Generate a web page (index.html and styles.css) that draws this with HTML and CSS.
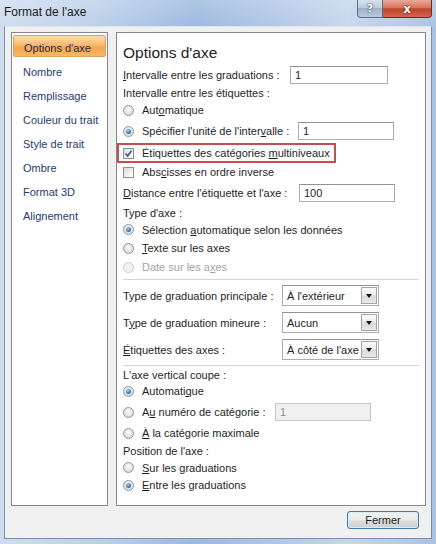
FILE: index.html
```html
<!DOCTYPE html>
<html lang="fr">
<head>
<meta charset="utf-8">
<title>Format de l'axe</title>
<link rel="stylesheet" href="styles.css">
</head>
<body>
<div class="window">
  <div class="titlebar">
    <span class="title">Format de l'axe</span>
    <div class="caption-btns">
      <span class="cbtn help">?</span>
      <span class="cbtn close">x</span>
    </div>
  </div>
  <div class="client">
    <div class="main">
      <ul class="nav">
        <li class="sel">Options d'axe</li>
        <li>Nombre</li>
        <li>Remplissage</li>
        <li>Couleur du trait</li>
        <li>Style de trait</li>
        <li>Ombre</li>
        <li>Format 3D</li>
        <li>Alignement</li>
      </ul>
      <div class="panel">
        <h1 class="heading">Options d'axe</h1>
        <div class="row h21"><span class="lab w167"><u>I</u>ntervalle entre les graduations :</span><span class="field w98">1</span></div>
        <div class="row h16"><span>Intervalle entre les étiquettes :</span></div>
        <div class="row h18"><span class="radio"></span><span>Aut<u>o</u>matique</span></div>
        <div class="row h24"><span class="radio on"></span><span class="lab w156">Spécifier l'unité de l'inter<u>v</u>alle :</span><span class="field w96">1</span></div>
        <div class="row h20 mark"><span class="check"><svg class="tick" viewBox="0 0 9 9" width="9" height="9"><path d="M1.6 4.4 L3.6 6.9 L7.6 1.7" /></svg></span><span>Étiquettes des catégories <u>m</u>ultiniveaux</span></div>
        <div class="row h18"><span class="check"></span><span>Abs<u>c</u>isses en ordre inverse</span></div>
        <div class="row h24"><span class="lab w176"><u>D</u>istance entre l'étiquette et l'axe :</span><span class="field w96">100</span></div>
        <div class="row h16"><span>Type d'axe :</span></div>
        <div class="row h17"><span class="radio on"></span><span>Sélection <u>a</u>utomatique selon les données</span></div>
        <div class="row h20"><span class="radio"></span><span><u>T</u>exte sur les axes</span></div>
        <div class="row h18 dis"><span class="radio"></span><span>Date sur les a<u>x</u>es</span></div>
        <div class="sep sep1"></div>
        <div class="row h27"><span class="lab w159">Type de <u>g</u>raduation principale :</span><span class="select"><span class="val">À l'extérieur</span><span class="drop"><span class="arrow"></span></span></span></div>
        <div class="row h27"><span class="lab w159">T<u>y</u>pe de graduation mineure :</span><span class="select"><span class="val">Aucun</span><span class="drop"><span class="arrow"></span></span></span></div>
        <div class="row h27"><span class="lab w159"><u>É</u>tiquettes des axes :</span><span class="select"><span class="val">À côté de l'axe</span><span class="drop"><span class="arrow"></span></span></span></div>
        <div class="sep sep2"></div>
        <div class="row h14"><span>L'axe vertical coupe :</span></div>
        <div class="row h18"><span class="radio on"></span><span>Automati<u>q</u>ue</span></div>
        <div class="row h24"><span class="radio"></span><span class="lab w133">A<u>u</u> numéro de catégorie :</span><span class="field w96 disabled">1</span></div>
        <div class="row h18"><span class="radio"></span><span><u>À</u> la catégorie maximale</span></div>
        <div class="row h18"><span>Position de l'axe :</span></div>
        <div class="row h15"><span class="radio"></span><span><u>S</u>ur les graduations</span></div>
        <div class="row h20"><span class="radio on"></span><span><u>E</u>ntre les graduations</span></div>
      </div>
    </div>
    <div class="footer"><button class="btn">Fermer</button></div>
  </div>
</div>
</body>
</html>
```
FILE: styles.css
```css
html, body {
  margin: 0;
  padding: 0;
}
body {
  font-family: "Liberation Sans", Arial, sans-serif;
  font-size: 11px;
  color: #1e1e1e;
}
.window {
  width: 436px;
  height: 544px;
  display: flex;
  flex-direction: column;
  background: linear-gradient(to right, #d0ddef 0%, #bcd0ea 22%, #9cb9df 45%, #b0c6e5 62%, #c6d6ec 80%, #abc2e2 100%);
  box-sizing: border-box;
}
.titlebar {
  height: 26px;
  flex: none;
  display: flex;
  justify-content: space-between;
  align-items: flex-start;
  background: linear-gradient(to bottom, rgba(255,255,255,0.2), rgba(255,255,255,0.02));
}
.title {
  font-size: 12px;
  color: #1a1a1a;
  margin: 5px 0 0 4px;
  line-height: 14px;
}
.caption-btns {
  display: flex;
  margin-right: 4px;
}
.cbtn {
  height: 18px;
  box-sizing: border-box;
  display: flex;
  align-items: center;
  justify-content: center;
  color: #fff;
  font-weight: bold;
  font-family: "DejaVu Sans", sans-serif;
  border: 1px solid #5b6f8c;
  border-top: none;
}
.help {
  width: 26px;
  font-size: 11px;
  border-radius: 0 0 0 4px;
  background: linear-gradient(to bottom, #d9e3ef 0%, #bccbdd 45%, #9fb1c9 50%, #b9c9dc 100%);
  text-shadow: 0 0 2px #2a3c58, 0 0 1px #2a3c58;
}
.close {
  width: 49px;
  font-size: 12px;
  border-color: #6b2a22;
  border-left: none;
  border-radius: 0 0 4px 0;
  background: linear-gradient(to bottom, #e9a999 0%, #d7745e 45%, #c2432c 52%, #d2664c 100%);
  text-shadow: 0 0 2px #5a1a12, 0 0 1px #5a1a12;
}
.client {
  flex: 1;
  margin: 0 4px 5px 4px;
  background: #f0f0f0;
  border: 1px solid #7590b5;
  border-top: 1px solid #dde5ef;
  padding: 5px 5px 0 6px;
  display: flex;
  flex-direction: column;
}
.main {
  display: flex;
  gap: 8px;
  height: 474px;
}
.nav {
  list-style: none;
  margin: 0;
  padding: 2px 1px 0 1px;
  width: 97px;
  box-sizing: border-box;
  background: #fff;
  border: 1px solid #828790;
}
.nav li {
  height: 24px;
  line-height: 26px;
  padding-left: 10px;
  color: #1f3b70;
  white-space: nowrap;
}
.nav li.sel {
  height: 22px;
  margin-bottom: 2px;
  line-height: 24px;
  box-sizing: border-box;
  padding-left: 10px;
  border: 1px solid #dda15b;
  border-radius: 2px;
  background: linear-gradient(to bottom, #fcdcac 0%, #f9c27c 35%, #f5a64c 60%, #f7b869 100%);
  color: #1f2b50;
}
.panel {
  width: 310px;
  box-sizing: border-box;
  background: #fff;
  border: 1px solid #828790;
  padding: 10px 6px 0 6px;
}
.heading {
  margin: 0;
  font-size: 15.5px;
  font-weight: normal;
  height: 21px;
  line-height: 20px;
  color: #1e1e1e;
}
.row {
  display: flex;
  align-items: center;
  white-space: nowrap;
  box-sizing: border-box;
}
.h14 { height: 14px; }
.h15 { height: 15px; }
.h16 { height: 16px; }
.h17 { height: 17px; }
.h18 { height: 18px; }
.h20 { height: 20px; }
.h21 { height: 21px; }
.h24 { height: 24px; }
.h27 { height: 27px; }
.lab { flex: none; }
.w133 { width: 133px; }
.w156 { width: 156px; }
.w159 { width: 159px; }
.w167 { width: 167px; }
.w176 { width: 176px; }
.mark {
  width: 219px;
  margin-left: -6px;
  padding-left: 4px;
  border: 2px solid #c0504d;
}
.dis { color: #a3a3a3; }
.field {
  height: 18px;
  box-sizing: border-box;
  border: 1px solid #abadb3;
  border-top-color: #8f9399;
  background: #fff;
  display: flex;
  align-items: center;
  padding-left: 4px;
}
.w96 { width: 96px; }
.w98 { width: 98px; }
.field.disabled {
  background: #f0f0f0;
  border-color: #c3c5c9;
  color: #8d8d8d;
}
.radio {
  width: 11px;
  height: 11px;
  box-sizing: border-box;
  flex: none;
  border-radius: 50%;
  border: 1px solid #959595;
  background: radial-gradient(circle at 50% 40%, #fbfbfb 0%, #e6e6e6 50%, #cfcfcf 100%);
  margin-right: 8px;
  display: flex;
  align-items: center;
  justify-content: center;
}
.radio.on::after {
  content: "";
  width: 5px;
  height: 5px;
  border-radius: 50%;
  background: radial-gradient(circle at 40% 35%, #a9dcf7 0%, #3f8cc9 45%, #174f86 100%);
}
.dis .radio {
  border-color: #c9c9c9;
  background: #f2f2f2;
}
.check {
  width: 11px;
  height: 11px;
  box-sizing: border-box;
  flex: none;
  border: 1px solid #8e8f8f;
  background: linear-gradient(135deg, #dcdcdc 0%, #f6f6f6 70%, #ffffff 100%);
  margin-right: 8px;
  display: flex;
  align-items: center;
  justify-content: center;
}
.tick path {
  fill: none;
  stroke: #3c4f88;
  stroke-width: 1.6;
}
.sep {
  border-top: 1px solid #d5d5d5;
}
.sep1 { margin: 3px 0 2px 0; }
.sep2 { margin: 2px 0 2px 0; }
.select {
  width: 97px;
  height: 21px;
  box-sizing: border-box;
  border: 1px solid #abadb3;
  border-top-color: #8f9399;
  background: #fff;
  display: flex;
}
.val {
  flex: 1;
  display: flex;
  align-items: center;
  padding-left: 4px;
  overflow: hidden;
}
.drop {
  width: 16px;
  box-sizing: border-box;
  margin: 1px;
  border: 1px solid #a5a5a5;
  background: linear-gradient(to bottom, #fbfbfb 0%, #ececec 48%, #dadada 52%, #e8e8e8 100%);
  display: flex;
  align-items: center;
  justify-content: center;
}
.arrow {
  width: 0;
  height: 0;
  border-left: 3px solid transparent;
  border-right: 3px solid transparent;
  border-top: 4px solid #111;
}
.footer {
  display: flex;
  justify-content: flex-end;
  padding-right: 7px;
  padding-top: 5px;
}
.btn {
  width: 72px;
  height: 18px;
  box-sizing: border-box;
  padding: 0;
  font-family: "Liberation Sans", Arial, sans-serif;
  font-size: 11px;
  color: #1e1e1e;
  border: 1px solid #3d7bad;
  border-radius: 3px;
  background: linear-gradient(to bottom, #f2f2f2 0%, #ebebeb 48%, #dddddd 52%, #cfcfcf 100%);
  box-shadow: inset 0 0 0 1px #d6eaf7;
}
```
